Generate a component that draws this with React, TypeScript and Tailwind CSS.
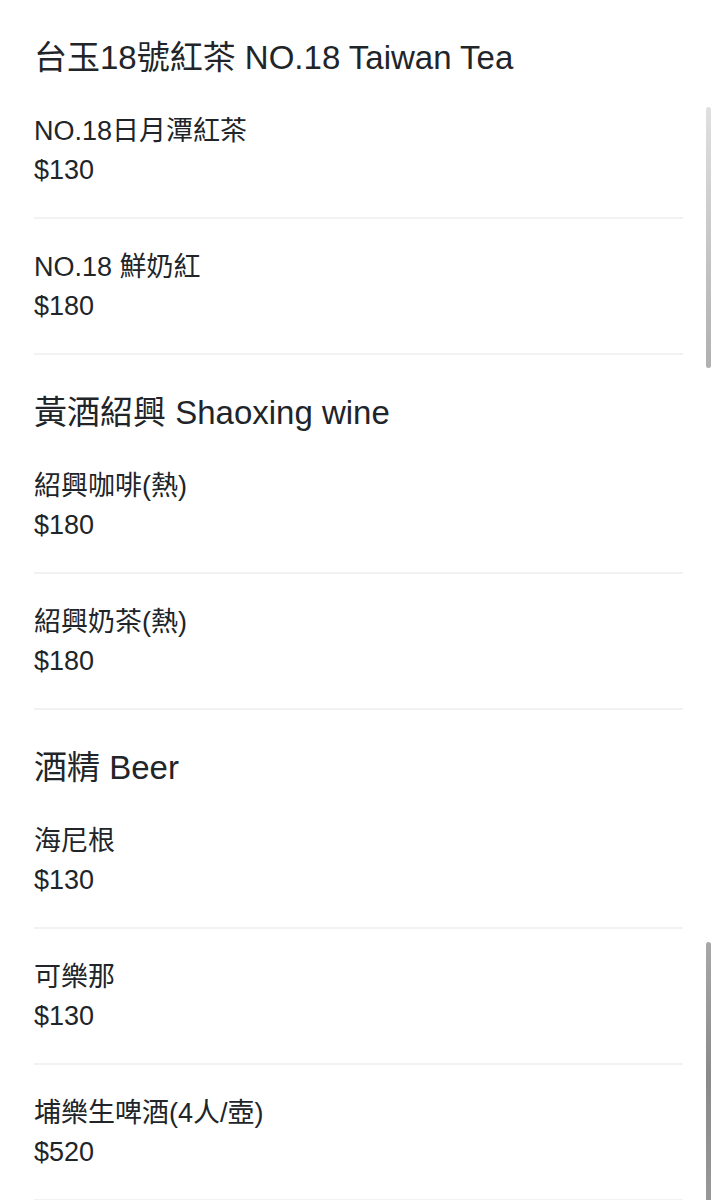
import React from 'react';

type Item = { name: string; price: string };
type Section = { title: string; items: Item[] };

const menu: Section[] = [
  {
    title: '台玉18號紅茶 NO.18 Taiwan Tea',
    items: [
      { name: 'NO.18日月潭紅茶', price: '$130' },
      { name: 'NO.18 鮮奶紅', price: '$180' },
    ],
  },
  {
    title: '黃酒紹興 Shaoxing wine',
    items: [
      { name: '紹興咖啡(熱)', price: '$180' },
      { name: '紹興奶茶(熱)', price: '$180' },
    ],
  },
  {
    title: '酒精 Beer',
    items: [
      { name: '海尼根', price: '$130' },
      { name: '可樂那', price: '$130' },
      { name: '埔樂生啤酒(4人/壺)', price: '$520' },
    ],
  },
];

const MenuItem = ({ item }: { item: Item }) => (
  <div className="border-b-2 border-[#f2f2f2] pt-[29px] pb-[27px] text-[27px] leading-[39px]">
    <div>{item.name}</div>
    <div>{item.price}</div>
  </div>
);

export default function App() {
  return (
    <div className="relative h-[1200px] overflow-hidden bg-white text-[#212529] font-['Liberation_Sans','Noto_Sans_CJK_TC',sans-serif]">
      <div className="pl-[34px] pr-[33px] pt-[38px]">
        {menu.map((section, i) => (
          <section key={section.title} className={i > 0 ? 'mt-[38px]' : ''}>
            <h2 className="mb-[5px] text-[33px] leading-[40px]">{section.title}</h2>
            {section.items.map((item) => (
              <MenuItem key={item.name} item={item} />
            ))}
          </section>
        ))}
      </div>

      {/* scroll indicators */}
      <div className="absolute right-[5px] top-[107px] h-[261px] w-[5px] rounded-full bg-gradient-to-b from-[#e0e0e0] to-[#b0b0b0]" />
      <div className="absolute right-[5px] top-[942px] h-[270px] w-[5px] rounded-full bg-gradient-to-b from-[#a8a8a8] via-[#8a8a8a] to-[#999]" />
    </div>
  );
}
